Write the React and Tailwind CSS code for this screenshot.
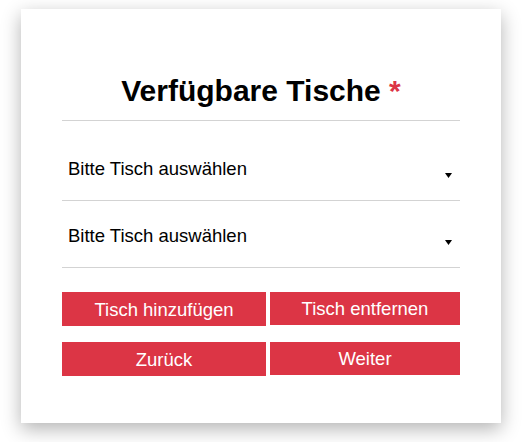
export default function App() {
  const font = { fontFamily: '"Liberation Sans", Arial, sans-serif' };
  const Arrow = () => (
    <svg width="7" height="5" viewBox="0 0 7 5" className="mt-[14px] shrink-0">
      <polygon points="0,0 7,0 3.5,5" fill="#000" />
    </svg>
  );
  return (
    <div className="w-[522px] h-[442px] bg-white pt-[9px] pl-[21px]" style={font}>
      <div className="w-[480px] h-[414px] bg-white shadow-[0_6px_18px_rgba(0,0,0,0.3)] px-[41px] pt-[64px]">
        <div className="text-[30px] leading-[36px] font-bold text-black text-center pb-[11px] border-b border-[#d3d3d3]">
          Verfügbare Tische <span className="text-[#dc3545]">*</span>
        </div>
        <div className="mt-[13px] pt-[21px] pb-[18px] border-b border-[#d3d3d3] flex items-center justify-between pl-[6px] pr-[8px]">
          <span className="text-[18.5px] leading-[27px] text-black">Bitte Tisch auswählen</span>
          <Arrow />
        </div>
        <div className="pt-[21px] pb-[18px] border-b border-[#d3d3d3] flex items-center justify-between pl-[6px] pr-[8px]">
          <span className="text-[18.5px] leading-[27px] text-black">Bitte Tisch auswählen</span>
          <Arrow />
        </div>
        <div className="mt-[24px] flex items-start gap-[4px]">
          <button className="w-[204px] h-[34px] pt-[1px] bg-[#dc3545] text-white text-[18.5px] leading-[27px] text-center">
            Tisch hinzufügen
          </button>
          <button className="w-[190px] h-[33px] pt-0 bg-[#dc3545] text-white text-[18.5px] leading-[25px] text-center">
            Tisch entfernen
          </button>
        </div>
        <div className="mt-[16px] flex items-start gap-[4px]">
          <button className="w-[204px] h-[34px] pt-[1px] bg-[#dc3545] text-white text-[18.5px] leading-[27px] text-center">
            Zurück
          </button>
          <button className="w-[190px] h-[33px] pt-0 bg-[#dc3545] text-white text-[18.5px] leading-[25px] text-center">
            Weiter
          </button>
        </div>
      </div>
    </div>
  );
}
